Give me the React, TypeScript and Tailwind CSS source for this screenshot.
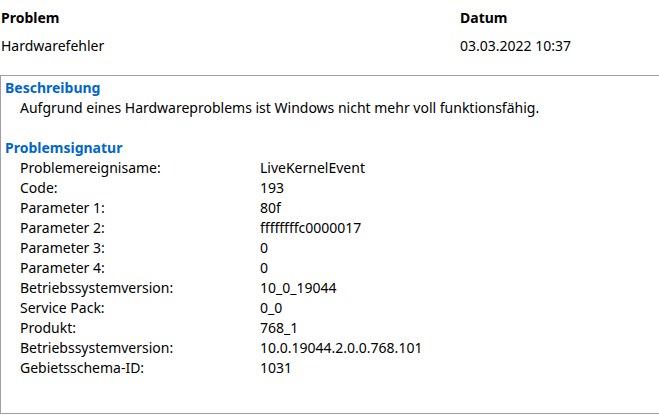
const rows: [string, string][] = [
  ["Problemereignisame:", "LiveKernelEvent"],
  ["Code:", "193"],
  ["Parameter 1:", "80f"],
  ["Parameter 2:", "ffffffffc0000017"],
  ["Parameter 3:", "0"],
  ["Parameter 4:", "0"],
  ["Betriebssystemversion:", "10_0_19044"],
  ["Service Pack:", "0_0"],
  ["Produkt:", "768_1"],
  ["Betriebssystemversion:", "10.0.19044.2.0.0.768.101"],
  ["Gebietsschema-ID:", "1031"],
];

export default function App() {
  return (
    <div className="w-[659px] h-[415px] bg-white text-black overflow-hidden font-['Noto_Sans',sans-serif] text-[14px]">
      {/* header table */}
      <div className="flex pt-[6px] pl-[1px]">
        <div className="w-[459px]">
          <div className="h-[24px] leading-[24px] font-bold">Problem</div>
          <div className="h-[32px] leading-[32px]">Hardwarefehler</div>
        </div>
        <div>
          <div className="h-[24px] leading-[24px] font-bold">Datum</div>
          <div className="h-[32px] leading-[32px]">03.03.2022 10:37</div>
        </div>
      </div>

      {/* details box */}
      <div className="mt-[13px] h-[339px] border-t border-l border-b border-[#a0a0a0] pl-[4px] pt-[2px]">
        <div className="h-[20px] leading-[20px] font-bold text-[#0066cc]">Beschreibung</div>
        <div className="h-[20px] leading-[20px] pl-[15px]">
          Aufgrund eines Hardwareproblems ist Windows nicht mehr voll funktionsfähig.
        </div>
        <div className="h-[20px] mt-[20px] leading-[20px] font-bold text-[#0066cc]">Problemsignatur</div>
        <div className="pl-[15px]">
          {rows.map(([k, v], i) => (
            <div key={i} className="flex h-[20px] leading-[20px]">
              <div className="w-[240px]">{k}</div>
              <div>{v}</div>
            </div>
          ))}
        </div>
      </div>
    </div>
  );
}
